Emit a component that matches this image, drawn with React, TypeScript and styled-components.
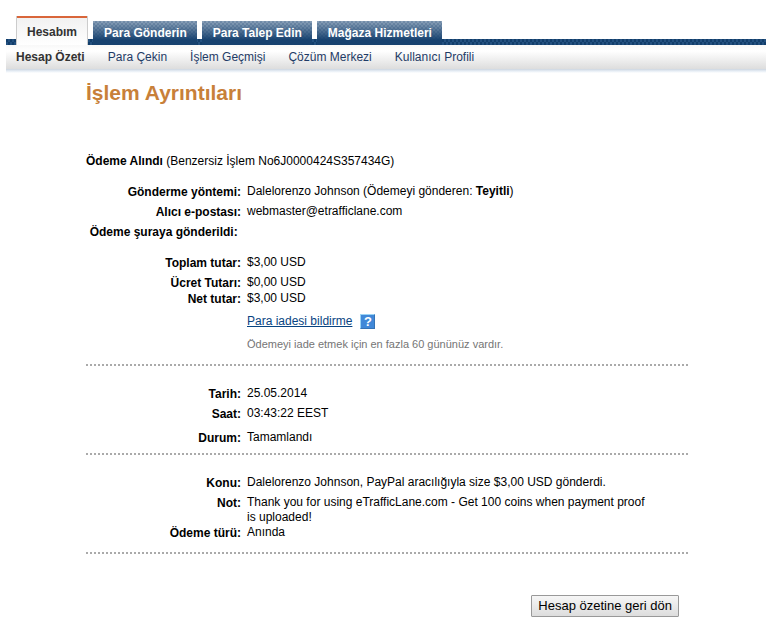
import React from "react";
import styled, { createGlobalStyle } from "styled-components";

const GlobalStyle = createGlobalStyle`
  * { box-sizing: border-box; }
  body {
    margin: 0;
    background: #fff;
    color: #000;
    font: 12px/15px "Liberation Sans", Arial, sans-serif;
  }
`;

const Header = styled.header`
  margin: 16px 11px 0 6px;
`;

const TabBar = styled.nav`
  display: flex;
  align-items: flex-end;
  gap: 5px;
  padding: 0 10px;
  background:
    repeating-conic-gradient(#23507f 0 25%, #123e6b 0 50%) left bottom / 4px 6px repeat-x;
`;

const Tab = styled.a<{ $active?: boolean }>`
  height: ${(p) => (p.$active ? 29 : 24)}px;
  padding: ${(p) => (p.$active ? "8px 10px 0" : "4px 10px 0 11px")};
  border: solid #ccc;
  border-width: ${(p) => (p.$active ? "0 1px" : "0")};
  box-shadow: ${(p) => (p.$active ? "inset 0 2px #d9663a" : "none")};
  background: ${(p) =>
    p.$active
      ? "linear-gradient(#f0f0f0, #fff)"
      : "repeating-conic-gradient(rgba(20, 60, 110, 0.2) 0 25%, transparent 0 50%) 0 0 / 4px 4px, linear-gradient(#8da3ba, #17426f 80%)"};
  color: ${(p) => (p.$active ? "#333" : "#fff")};
  font-weight: bold;
  line-height: 16px;
  text-decoration: none;
  white-space: nowrap;
`;

const SubNav = styled.nav`
  display: flex;
  gap: 23px;
  height: 28px;
  padding: 4px 10px 0;
  background: linear-gradient(#f8f8f8, #fff 6px, #ddd 24px, #ccd5e0 24px, #e6edf5 26px, #fff 28px);
`;

const SubLink = styled.a<{ $active?: boolean }>`
  color: ${(p) => (p.$active ? "#333" : "#1f3b66")};
  font-weight: ${(p) => (p.$active ? "bold" : "normal")};
  line-height: 16px;
  text-decoration: none;
  white-space: nowrap;
`;

const Main = styled.main`
  max-width: 688px;
  padding-left: 86px;
`;

const Title = styled.h1`
  margin: 7px 0 48px;
  color: #c88039;
  font-size: 21px;
  line-height: 26px;
`;

const Summary = styled.p`
  margin: 0;
`;

const Details = styled.dl<{ $before: number }>`
  margin: ${(p) => p.$before}px 0 0;
`;

const Row = styled.div<{ $after?: number }>`
  display: grid;
  grid-template-columns: 155px minmax(0, 406px);
  column-gap: 6px;
  margin-bottom: ${(p) => p.$after ?? 4}px;
`;

const Label = styled.dt`
  padding-top: 1px;
  font-weight: bold;
  text-align: right;
  white-space: nowrap;
`;

const Value = styled.dd`
  margin: 0;
`;

const Refund = styled.div`
  display: flex;
  align-items: center;
  gap: 8px;
  margin: 7px 0 8px 161px;
`;

const RefundLink = styled.a`
  color: #084482;
`;

const HelpButton = styled.button`
  width: 15px;
  height: 15px;
  padding: 0;
  border: 1px solid;
  border-color: #9bd4f5 #3573b5 #3573b5 #9bd4f5;
  background: #4088d8;
  color: #fff;
  font: bold 13px/13px "Liberation Sans", Arial, sans-serif;
`;

const Hint = styled.p`
  margin: 0 0 12px 161px;
  color: #757575;
  font-size: 11px;
`;

const Divider = styled.hr`
  height: 2px;
  margin: 0;
  border: 0;
  background: repeating-linear-gradient(to right, #aaa 0 2px, transparent 2px 4px);
`;

const Actions = styled.div`
  display: flex;
  justify-content: flex-end;
  padding: 41px 9px 5px 0;
`;

const BackButton = styled.button`
  height: 22px;
  padding: 0 6px;
  border: 1px solid #999;
  border-radius: 1px;
  background: linear-gradient(#f6f6f6, #ddd);
  color: #000;
  font: 13px/20px "Liberation Sans", Arial, sans-serif;
`;

const tabs = ["Hesabım", "Para Gönderin", "Para Talep Edin", "Mağaza Hizmetleri"];
const links = ["Hesap Özeti", "Para Çekin", "İşlem Geçmişi", "Çözüm Merkezi", "Kullanıcı Profili"];

type DetailProps = { label: string; after?: number; children?: React.ReactNode };

const Detail = ({ label, after, children }: DetailProps) => (
  <Row $after={after}>
    <Label>{label}</Label>
    <Value>{children}</Value>
  </Row>
);

export default function App() {
  return (
    <>
      <GlobalStyle />
      <Header>
        <TabBar>
          {tabs.map((t, i) => (
            <Tab key={t} href="#" $active={i === 0}>{t}</Tab>
          ))}
        </TabBar>
        <SubNav>
          {links.map((t, i) => (
            <SubLink key={t} href="#" $active={i === 0}>{t}</SubLink>
          ))}
        </SubNav>
      </Header>
      <Main>
        <Title>İşlem Ayrıntıları</Title>
        <Summary><b>Ödeme Alındı</b> (Benzersiz İşlem No6J0000424S357434G)</Summary>
        <Details $before={15}>
          <Detail label="Gönderme yöntemi:">
            Dalelorenzo Johnson (Ödemeyi gönderen: <b>Teyitli</b>)
          </Detail>
          <Detail label="Alıcı e-postası:">webmaster@etrafficlane.com</Detail>
          <Detail label={"Ödeme şuraya gönderildi:\u00a0"} after={15} />
          <Detail label="Toplam tutar:">$3,00 USD</Detail>
          <Detail label="Ücret Tutarı:" after={0}>$0,00 USD</Detail>
          <Detail label="Net tutar:" after={0}>$3,00 USD</Detail>
        </Details>
        <Refund>
          <RefundLink href="#">Para iadesi bildirme</RefundLink>
          <HelpButton type="button">?</HelpButton>
        </Refund>
        <Hint>Ödemeyi iade etmek için en fazla 60 gününüz vardır.</Hint>
        <Divider />
        <Details $before={20}>
          <Detail label="Tarih:">25.05.2014</Detail>
          <Detail label="Saat:" after={8}>03:43:22 EEST</Detail>
          <Detail label="Durum:" after={7}>Tamamlandı</Detail>
        </Details>
        <Divider />
        <Details $before={20}>
          <Detail label="Konu:">Dalelorenzo Johnson, PayPal aracılığıyla size $3,00 USD gönderdi.</Detail>
          <Detail label="Not:" after={0}>
            Thank you for using eTrafficLane.com - Get 100 coins when payment proof is uploaded!
          </Detail>
          <Detail label="Ödeme türü:" after={11}>Anında</Detail>
        </Details>
        <Divider />
        <Actions>
          <BackButton type="button">Hesap özetine geri dön</BackButton>
        </Actions>
      </Main>
    </>
  );
}
